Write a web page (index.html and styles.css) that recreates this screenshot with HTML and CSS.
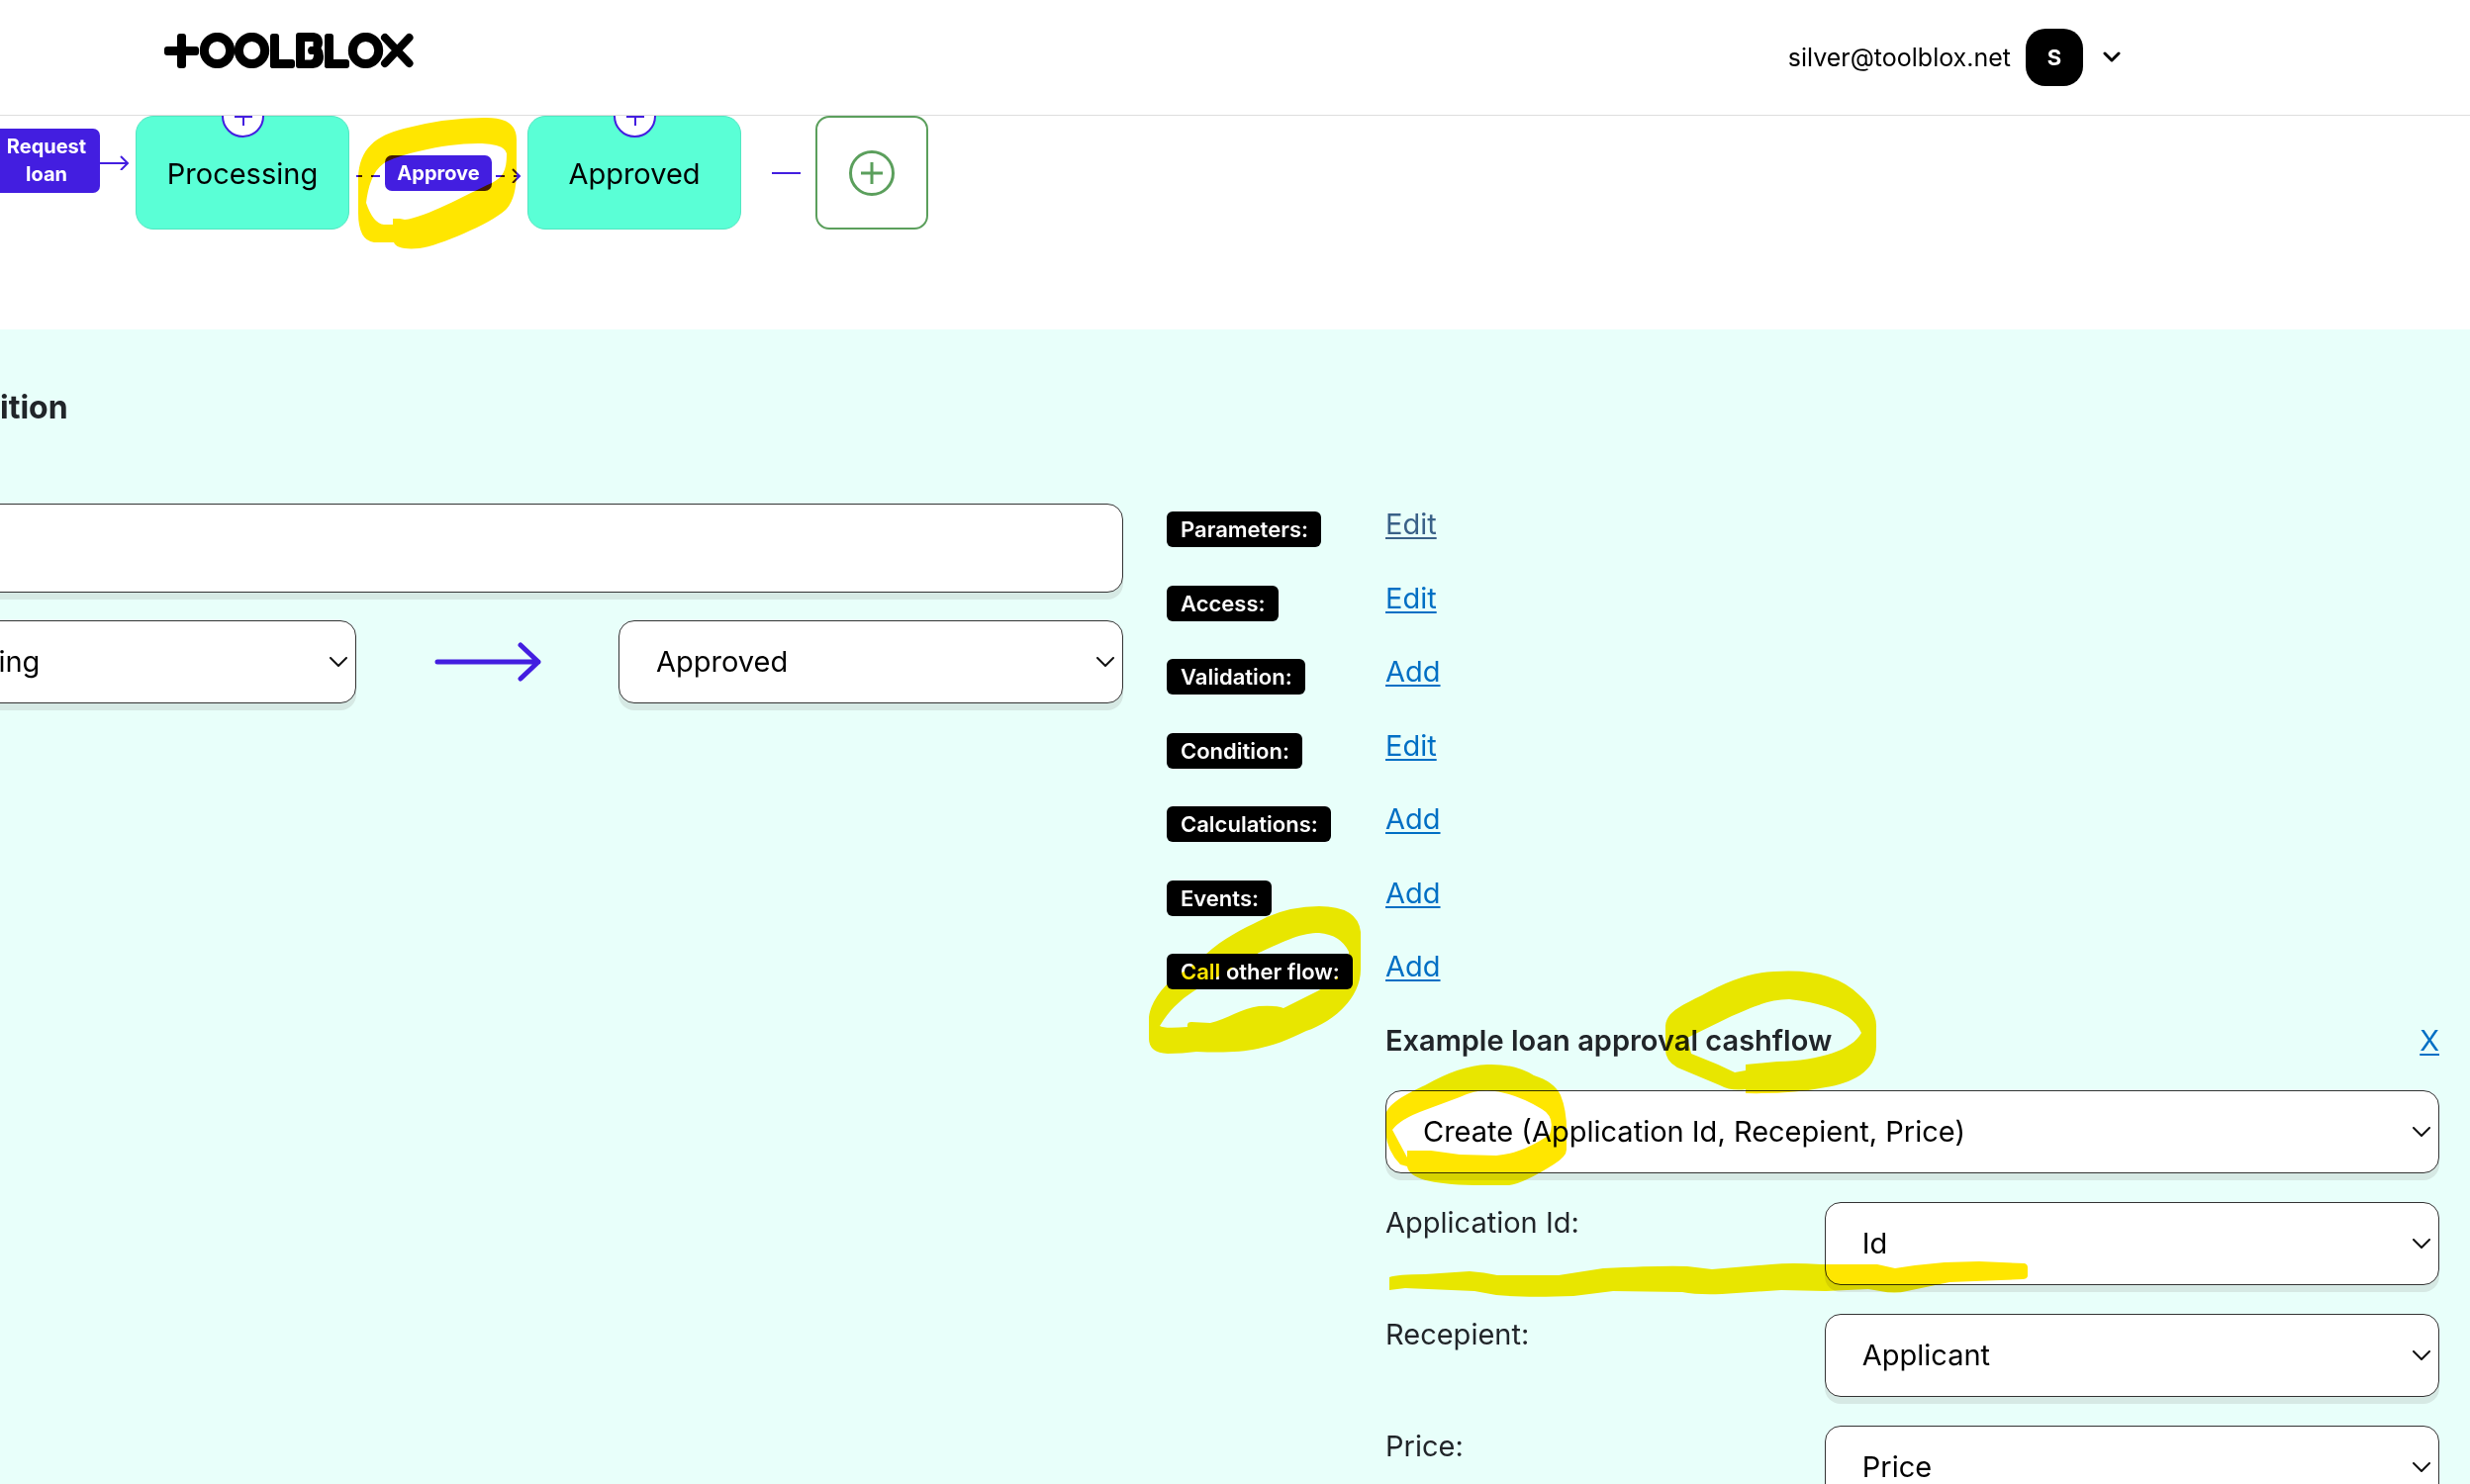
FILE: index.html
```html
<!DOCTYPE html>
<html lang="en">
<head>
<meta charset="utf-8">
<title>Toolblox</title>
<meta name="viewport" content="width=device-width, initial-scale=1">
<link rel="stylesheet" href="styles.css">
</head>
<body>
<header class="topbar">
  <a class="logo" href="#" aria-label="Toolblox">
    <svg width="252" height="36" viewBox="166 33 252 36" fill="none" stroke="#000" stroke-width="9" stroke-linecap="round" stroke-linejoin="round">
      <g stroke="none" fill="#000">
        <rect x="166" y="47" width="35" height="9" rx="3"/>
        <rect x="179" y="34" width="9" height="35" rx="3"/>
        <rect x="273" y="34" width="9" height="35" rx="3"/>
        <rect x="273" y="60" width="25" height="9" rx="3"/>
        <rect x="328" y="34" width="9" height="35" rx="3"/>
        <rect x="328" y="60" width="25" height="9" rx="3"/>
      </g>
      <ellipse cx="219.500" cy="51" rx="13.200" ry="13.600"/>
      <ellipse cx="254.500" cy="51" rx="13.200" ry="13.600"/>
      <ellipse cx="369.500" cy="51" rx="13.200" ry="13.600"/>
      <path fill="#000" fill-rule="evenodd" stroke="none" d="M302 33H317Q326 34 326 43Q326 46 324.500 48.500Q327 52 327 57Q327 68 316 69H302Q299 69 299 66V36Q299 33 302 33ZM308 42V60.500H314Q317 60 317 55H313.500Q311 54 311 51Q311 48 313.500 47H316.500V42Z"/>
      <path stroke-width="8" d="M389 38L413.500 64M413.500 38L389 64"/>
    </svg>
  </a>
  <button class="account" type="button">
    <span class="account-email">silver@toolblox.net</span>
    <span class="avatar">S</span>
    <svg class="account-caret" width="18" height="12" viewBox="0 0 18 12" fill="none" stroke="#000" stroke-width="3" stroke-linecap="round" stroke-linejoin="round"><path d="M2 2L9 9L16 2"/></svg>
  </button>
</header>

<section class="flow" aria-label="Workflow">
  <div class="step step-raised">
    <button class="pill pill-tall" type="button">Request loan</button>
    <svg width="36" height="20" viewBox="0 0 36 20" fill="none" stroke="#431EE0" stroke-width="2"><path d="M0 13H28M21 6L28 13L21 20"/></svg>
  </div>
  <div class="state">
    Processing
    <button class="state-add" type="button" aria-label="Add before Processing"><svg width="18" height="18" viewBox="0 0 18 18" stroke="#431EE0" stroke-width="2"><path d="M9 0V18M0 9H18"/></svg></button>
  </div>
  <div class="step">
    <svg width="36" height="20" viewBox="0 0 36 20" stroke="#431EE0" stroke-width="2"><path d="M7 13H13M22 13H31"/></svg>
    <button class="pill" type="button">Approve</button>
    <svg width="36" height="20" viewBox="0 0 36 20" fill="none" stroke="#431EE0" stroke-width="2"><path d="M4 13H13M22 13H28M21 6L28 13L21 20"/></svg>
    <svg class="marker marker-approve" width="162" height="134" viewBox="362 118 162 134"><path fill-rule="evenodd" d="M489 119Q522 118 522 141V172Q522 200 512 211C500 224 445 248 424 251Q401 253 398 245L378 245Q362 243 362 215V180C363 150 380 137 408 130Q450 119 489 119ZM487 145C450 144 400 157 388 165C376 173 372 190 370 205Q377 226 388 227L397 227V221H404L409 222C430 220 470 197 497 185C510 178 512 170 512 155Q510 146 487 145Z"/></svg>
  </div>
  <div class="state">
    Approved
    <button class="state-add" type="button" aria-label="Add before Approved"><svg width="18" height="18" viewBox="0 0 18 18" stroke="#431EE0" stroke-width="2"><path d="M9 0V18M0 9H18"/></svg></button>
  </div>
  <span class="link-line"></span>
  <button class="new-state" type="button" aria-label="Add state">
    <svg width="48" height="48" viewBox="0 0 48 48" fill="none" stroke="#5B9F5C" stroke-width="3"><circle cx="24" cy="24" r="21.500"/><path d="M24 13V35M13 24H35"/></svg>
  </button>
</section>

<main class="editor">
  <h2 class="editor-title">ition</h2>
  <div class="editor-grid">
    <form class="transition">
      <input class="field name-field" type="text" aria-label="Transition name">
      <div class="route">
        <span class="picker"><select class="field" aria-label="From state"><option>Processing</option></select><svg class="caret" width="18" height="12" viewBox="0 0 18 12"><path d="M1 1L9 9L17 1"/></svg></span>
        <svg class="route-arrow" width="108" height="40" viewBox="0 0 108 40" fill="none" stroke="#431EE0" stroke-width="5" stroke-linecap="round" stroke-linejoin="round"><path d="M3 20H105M87 3L105 20L87 37"/></svg>
        <span class="picker"><select class="field" aria-label="To state"><option>Approved</option></select><svg class="caret" width="18" height="12" viewBox="0 0 18 12"><path d="M1 1L9 9L17 1"/></svg></span>
      </div>
    </form>

    <div class="details">
      <dl class="options">
        <dt><span class="tag">Parameters:</span></dt><dd><a class="visited" href="#">Edit</a></dd>
        <dt><span class="tag">Access:</span></dt><dd><a href="#">Edit</a></dd>
        <dt><span class="tag">Validation:</span></dt><dd><a href="#">Add</a></dd>
        <dt><span class="tag">Condition:</span></dt><dd><a href="#">Edit</a></dd>
        <dt><span class="tag">Calculations:</span></dt><dd><a href="#">Add</a></dd>
        <dt><span class="tag">Events:</span></dt><dd><a href="#">Add</a></dd>
        <dt class="marked"><span class="tag">Call other flow:</span>
          <svg class="marker marker-call" width="216" height="152" viewBox="1160 915 216 152"><path fill-rule="evenodd" d="M1333 916Q1372 916 1375 942V980C1375 1010 1345 1034 1320 1042C1280 1062 1255 1065 1209 1063Q1195 1065 1180 1065Q1161 1064 1161 1050V1028C1163 1010 1180 990 1200 980L1218 965C1240 945 1265 935 1280 927Q1305 916 1333 916ZM1333 943C1315 943 1300 950 1266 966L1206 1002Q1185 1015 1172 1037Q1176 1040 1200 1038Q1199 1033 1204 1033L1223 1034C1240 1030 1255 1019 1272 1017Q1290 1016 1297 1019L1331 1002Q1364 985 1363 962Q1355 945 1333 943Z"/></svg>
        </dt><dd><a href="#">Add</a></dd>
      </dl>

      <section class="call">
        <div class="call-head">
          <h3 class="call-title">Example loan approval cashflow
            <svg class="marker marker-cashflow" width="216" height="126" viewBox="1682 981 216 126"><path fill-rule="evenodd" d="M1793 983Q1850 979 1878 1006Q1897 1022 1896 1040V1058C1896 1085 1870 1096 1845 1100Q1810 1107 1764 1106V1102Q1749 1104 1738 1098L1695 1080Q1682 1073 1683 1060V1038C1684 1025 1695 1019 1720 1007Q1760 984 1793 983ZM1808 1011C1785 1011 1765 1022 1750 1028L1705 1050L1709 1066L1736 1077L1753 1085L1764 1083V1077L1796 1074C1840 1073 1872 1062 1881 1045Q1870 1018 1808 1011Z"/></svg>
          </h3>
          <a href="#" aria-label="Remove call">X</a>
        </div>
        <span class="picker"><select class="field" aria-label="Function"><option>Create (Application Id, Recepient, Price)</option></select><svg class="caret" width="18" height="12" viewBox="0 0 18 12"><path d="M1 1L9 9L17 1"/></svg>
          <svg class="marker marker-create" width="184" height="124" viewBox="1400 1076 184 124"><path fill-rule="evenodd" d="M1503 1077Q1530 1076 1550 1088Q1570 1094 1577 1108Q1584 1125 1583 1150V1163Q1583 1170 1570 1178Q1540 1197 1525 1199H1490C1445 1198 1424 1192 1422 1180L1415 1178Q1402 1165 1400 1145V1128C1403 1115 1425 1105 1440 1098Q1475 1078 1503 1077ZM1503 1103Q1490 1103 1475 1110L1440 1123Q1415 1132 1407 1143L1422 1171V1164H1446L1475 1168L1512 1169C1535 1167 1550 1158 1566 1148Q1572 1130 1558 1122Q1530 1105 1503 1103Z"/></svg>
        </span>
        <div class="param">
          <label for="p-id">Application Id:</label>
          <span class="picker"><select class="field" id="p-id"><option>Id</option></select><svg class="caret" width="18" height="12" viewBox="0 0 18 12"><path d="M1 1L9 9L17 1"/></svg></span>
          <svg class="marker marker-id" width="646" height="38" viewBox="1404 1275 646 38"><path d="M1404 1292Q1412 1289 1440 1289L1485 1286Q1500 1287 1513 1290L1575 1290L1620 1283Q1680 1280 1705 1281L1730 1284L1790 1279Q1810 1277 1840 1279L1897 1279L1915 1283Q1940 1279 1965 1277L2000 1276L2046 1278Q2049 1279 2049 1282V1291Q2048 1294 2044 1294L1970 1297L1927 1306Q1915 1309 1900 1306L1888 1304L1845 1306L1800 1305L1740 1309Q1715 1310 1700 1307L1630 1306L1590 1311Q1540 1313 1512 1310L1490 1306L1420 1303L1404 1305Z"/></svg>
        </div>
        <div class="param">
          <label for="p-rec">Recepient:</label>
          <span class="picker"><select class="field" id="p-rec"><option>Applicant</option></select><svg class="caret" width="18" height="12" viewBox="0 0 18 12"><path d="M1 1L9 9L17 1"/></svg></span>
        </div>
        <div class="param">
          <label for="p-price">Price:</label>
          <span class="picker"><select class="field" id="p-price"><option>Price</option></select><svg class="caret" width="18" height="12" viewBox="0 0 18 12"><path d="M1 1L9 9L17 1"/></svg></span>
        </div>
      </section>
    </div>
  </div>
</main>
</body>
</html>
```

FILE: styles.css
```css
* { box-sizing: border-box; }

body {
  display: flex;
  flex-direction: column;
  margin: 0;
  height: 100vh;
  background: #fff;
  color: #212529;
  font: 400 29px/42px Inter, "Liberation Sans", sans-serif;
}

button, input, select { font: inherit; color: #000; }
button { padding: 0; border: 0; background: none; }
svg { display: block; flex: none; }
a { color: #006fc4; text-underline-offset: 3px; text-decoration-thickness: 2px; }
a.visited { color: #3a6188; }

/* Header */
.topbar {
  position: relative;
  z-index: 2;
  display: flex;
  flex: none;
  align-items: center;
  justify-content: space-between;
  height: 117px;
  padding: 0 353px 0 166px;
  border-bottom: 1px solid #ddd;
  background: #fff;
}
.logo { padding-bottom: 14px; }
.account { display: flex; align-items: center; gap: 15px; font-size: 25px; }
.avatar {
  width: 58px;
  height: 58px;
  border-radius: 20px;
  background: #000;
  color: #fff;
  font-size: 22px;
  font-weight: 700;
  line-height: 58px;
}
.account-caret { margin-left: 5px; }

/* Workflow strip */
.flow { display: flex; flex: none; align-items: center; padding-bottom: 101px; }
.step { position: relative; display: flex; align-items: center; }
.step-raised { margin: 0 0 25px -7px; }
.pill {
  width: 108px;
  padding: 4px 10px;
  border-radius: 7px;
  background: #431ee0;
  color: #fff;
  font-size: 20px;
  font-weight: 700;
  line-height: 28px;
}
.pill-tall { padding: 4px 10px 5px; }
.state {
  position: relative;
  width: 216px;
  height: 115px;
  border: 1px solid #52e6c1;
  border-radius: 18px;
  background: #5affd6;
  color: #000;
  line-height: 115px;
  text-align: center;
}
.state-add {
  position: absolute;
  top: -22px;
  left: 86px;
  display: grid;
  place-items: center;
  width: 43px;
  height: 43px;
  border: 2px solid #431ee0;
  border-radius: 50%;
  background: #fff;
}
.link-line { width: 29px; height: 2px; margin: 0 15px 0 31px; background: #431ee0; }
.new-state {
  display: grid;
  place-items: center;
  width: 114px;
  height: 115px;
  border: 2px solid #5b9f5c;
  border-radius: 14px;
}

/* Highlighter strokes lie over the content */
.marker { position: absolute; z-index: 1; fill: #ffe600; mix-blend-mode: multiply; pointer-events: none; }
.marker-approve { top: -39px; left: 9px; }
.marker-call { top: -41px; left: -19px; }
.marker-cashflow { top: -51px; left: 282px; }
.marker-create { top: -27px; left: 0; }
.marker-id { top: 59px; left: 4px; }

/* Transition editor */
.editor { flex: 1; min-height: 0; overflow: hidden; padding: 58px 31px 0 0; background: #e8fffa; }
.editor-title { margin: 0 0 76px; font-size: 32px; font-weight: 700; }
.editor-grid { display: grid; grid-template-columns: 1135fr 1286fr; gap: 44px; }
.transition { display: grid; gap: 28px; align-content: start; margin-left: -150px; }
.field {
  display: block;
  width: 100%;
  height: 84px;
  padding: 0 37px;
  border: 1px solid #333;
  border-radius: 16px;
  background: #fff;
  box-shadow: 0 7px 0 #d6e9e4;
  appearance: none;
}
.name-field { height: 90px; }
.picker { position: relative; display: block; }
.caret {
  position: absolute;
  top: 37px;
  right: 9px;
  fill: none;
  stroke: #111;
  stroke-width: 2;
  stroke-linecap: round;
  stroke-linejoin: round;
}
.route { display: grid; grid-template-columns: 1fr 265px 1fr; align-items: center; }
.route-arrow { justify-self: center; }

.options { display: grid; grid-template-columns: 221px 1fr; grid-auto-rows: 1fr; height: 522px; margin: 0; }
.options dt { padding-top: 8px; }
.options dd { margin: 0; }
.marked { position: relative; }
.tag {
  display: inline-block;
  padding: 0 13px 0 14px;
  border-radius: 6px;
  background: #000;
  color: #fff;
  font-size: 22px;
  font-weight: 600;
  line-height: 36px;
  vertical-align: top;
}

.call { display: grid; gap: 29px; margin-left: 221px; }
.call-head { display: flex; justify-content: space-between; }
.call-title { position: relative; margin: 0; font-size: 29px; font-weight: 600; }
.param { position: relative; display: grid; grid-template-columns: 5fr 7fr; }
```
